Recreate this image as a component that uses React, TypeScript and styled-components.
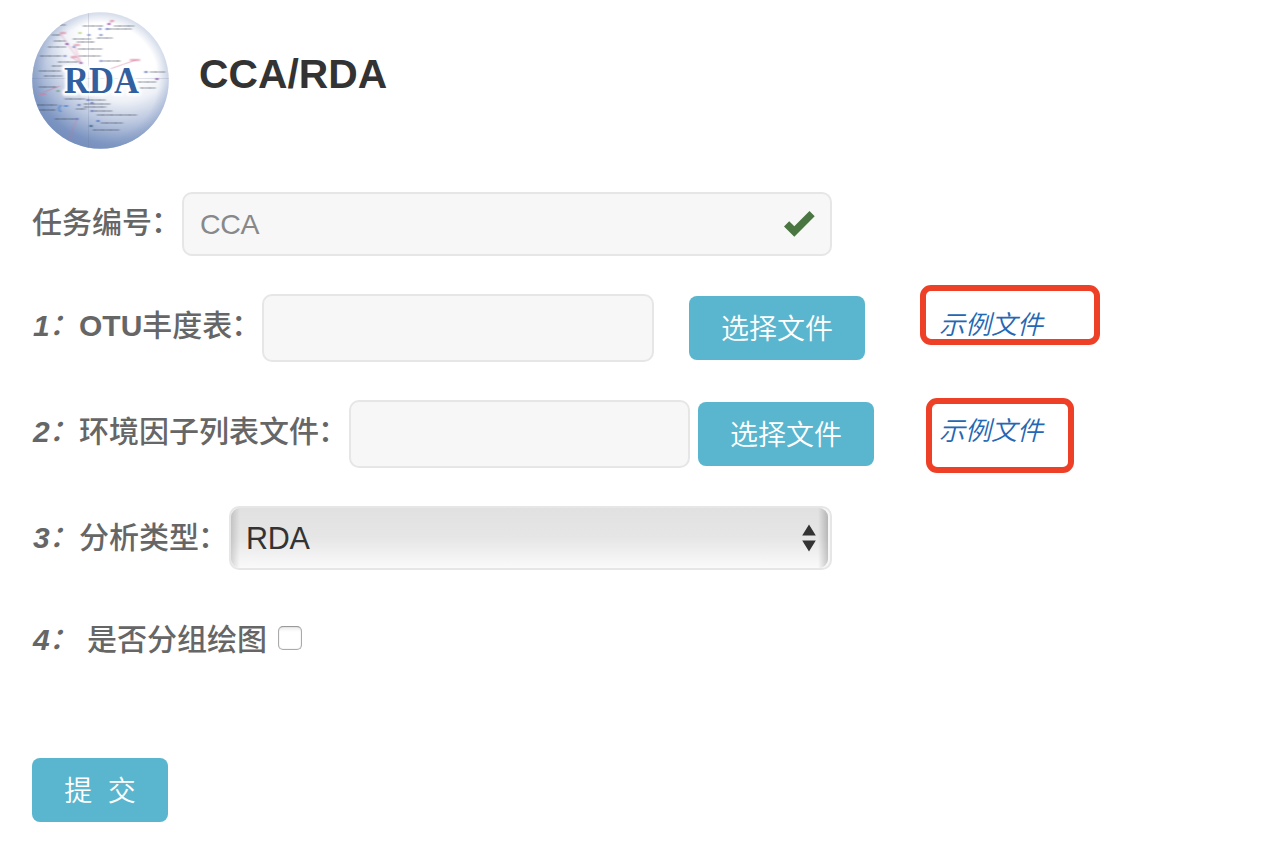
import React from "react";
import styled, { createGlobalStyle } from "styled-components";

const latin = '"Liberation Sans", Arial';
const cjk = '"Noto Sans CJK SC", sans-serif';

const GlobalStyle = createGlobalStyle`
  * { box-sizing: border-box; }
  body {
    margin: 0;
    background: #fff;
    font-family: ${latin}, ${cjk};
  }
`;

const Page = styled.main`
  width: 1270px;
  height: 868px;
  padding: 12px 32px 0;
  overflow: hidden;
`;

const Header = styled.header`
  display: flex;
  align-items: flex-start;
  gap: 30px;
  height: 180px;
`;

const Logo = styled.svg`
  width: 137px;
  height: 137px;
  flex: none;
`;

const Title = styled.h1`
  margin: 39px 0 0;
  font-size: 40.8px;
  line-height: 46px;
  font-weight: 700;
  color: #333;
`;

const Row = styled.div<{ $height: number; $gap: number }>`
  display: flex;
  align-items: center;
  height: ${(p) => p.$height}px;
  margin-bottom: ${(p) => p.$gap}px;
`;

const Label = styled.label<{ $width: number; $top?: number; $bottom?: number }>`
  flex: none;
  width: ${(p) => p.$width}px;
  padding: ${(p) => p.$top ?? 0}px 0 ${(p) => p.$bottom ?? 0}px;
  display: flex;
  align-items: baseline;
  white-space: pre;
  font-size: 30px;
  line-height: 40px;
  font-weight: 500;
  color: #666;
`;

const Latin = styled.span`
  font-weight: 700;
`;

const Step = styled.span<{ $space?: number }>`
  padding-left: 1px;
  font-style: italic;
  font-weight: 700;
  width: ${(p) => p.$space ?? 47}px;
`;

const Colon = styled.span`
  display: inline-block;
  width: 30px;
  margin-left: -1px;
  font-weight: 500;
  transform: translateY(-1px);
`;

const Field = styled.div<{ $width: number }>`
  display: flex;
  align-items: center;
  justify-content: space-between;
  flex: none;
  width: ${(p) => p.$width}px;
  height: 100%;
  padding: 0 15px 0 16px;
  border: 2px solid #e6e6e6;
  border-radius: 10px;
  background: #f7f7f7;
  font-size: 28.5px;
  letter-spacing: -0.3px;
  color: #888;
`;

const Check = styled.svg`
  width: 31px;
  height: 26px;
`;

const Button = styled.button<{ $width: number; $left?: number }>`
  flex: none;
  width: ${(p) => p.$width}px;
  height: 64px;
  margin: 0 0 0 ${(p) => p.$left ?? 0}px;
  padding: 3px 0 0;
  border: 0;
  border-radius: 8px;
  background: #5ab6ce;
  color: #fff;
  font-family: ${latin}, ${cjk};
  font-size: 28px;
  font-weight: 350;
  line-height: 61px;
  white-space: pre;
`;

const Example = styled.a<{ $left: number }>`
  position: relative;
  margin-left: ${(p) => p.$left}px;
  padding-bottom: 7px;
  font-size: 26px;
  line-height: 36px;
  font-style: italic;
  font-weight: 350;
  color: #2468b4;
`;

const Marker = styled.span<{ $x: number; $y: number; $w: number; $h: number }>`
  position: absolute;
  left: ${(p) => p.$x}px;
  top: ${(p) => p.$y}px;
  width: ${(p) => p.$w}px;
  height: ${(p) => p.$h}px;
  border: 6px solid #ee4026;
  border-radius: 11px;
`;

const Select = styled.div`
  flex: none;
  width: 603px;
  height: 64px;
  padding-right: 2px;
  border: 2px solid #e6e6e6;
  border-radius: 10px;
  background: #f7f7f7;
`;

const SelectFace = styled.div`
  display: flex;
  align-items: center;
  justify-content: space-between;
  height: 60px;
  padding: 0 12px 0 15px;
  border-radius: 9px;
  background:
    linear-gradient(90deg, rgba(0, 0, 0, 0.14), transparent 9px, transparent calc(100% - 10px), rgba(0, 0, 0, 0.2)),
    linear-gradient(#e1e1e1, #e6e6e6 50%, #fafafa);
  font-size: 30.5px;
  letter-spacing: -0.3px;
  color: #333;
`;

const Arrows = styled.svg`
  width: 14px;
  height: 28px;
`;

const Checkbox = styled.span`
  width: 24px;
  height: 24px;
  border: 1px solid #aaa;
  border-top-color: #999;
  border-radius: 5px;
  background: linear-gradient(#ececec, #fff 5px);
  box-shadow: inset 0 0 1px rgba(0, 0, 0, 0.35);
`;

const names: [number, number, number][] = [
  [22, 13, 12], [51, 14, 20], [82, 14, 20], [76, 17, 24], [20, 23, 8],
  [41, 27, 18], [45, 30, 18], [65, 26, 16], [22, 29, 12], [16, 35, 18],
  [46, 37, 24], [8, 44, 22], [47, 44, 22], [26, 50, 20], [71, 49, 18],
  [20, 54, 10], [7, 59, 22], [12, 64, 18], [118, 60, 15], [106, 70, 18],
  [7, 75, 18], [108, 76, 16], [33, 87, 20], [58, 88, 16], [5, 93, 20],
  [52, 92, 26], [6, 98, 18], [52, 95, 22], [44, 97, 10], [62, 99, 18],
  [65, 103, 40], [23, 107, 22], [69, 111, 22], [61, 118, 26],
];

const dots: [number, number, string][] = [
  [77, 12, "#9c4fb0"], [75, 17, "#8290cb"], [68, 17, "#8290cb"], [69, 23, "#8290cb"],
  [57, 23, "#8290cb"], [48, 21, "#b9cf78"], [35, 32, "#844fa8"], [42, 35, "#8290cb"],
  [33, 44, "#8290cb"], [49, 51, "#9366af"], [69, 49, "#8290cb"], [114, 60, "#6676bd"],
  [125, 67, "#864fb2"], [56, 88, "#6676bd"], [60, 91, "#6676bd"], [47, 93, "#6676bd"],
  [60, 99, "#6676bd"], [45, 107, "#6676bd"], [66, 109, "#4e73c5"],
  [59, 114, "#306184"], [26, 79, "#73a17b"],
];

function RdaLogo() {
  return (
    <Logo viewBox="0 0 137 137">
      <defs>
        <radialGradient id="ball" cx="0.66" cy="0.22" r="0.86">
          <stop offset="0.34" stopColor="#ffffff" />
          <stop offset="0.5" stopColor="#eef1f7" />
          <stop offset="0.68" stopColor="#bcc8e0" />
          <stop offset="0.88" stopColor="#7b94c1" />
          <stop offset="1" stopColor="#6884b6" />
        </radialGradient>
        <radialGradient id="rim" cx="0.5" cy="0.5" r="0.5">
          <stop offset="0.84" stopColor="#8299c2" stopOpacity="0" />
          <stop offset="1" stopColor="#8299c2" stopOpacity="0.35" />
        </radialGradient>
        <clipPath id="disc"><circle cx="68.5" cy="68.5" r="68.3" /></clipPath>
        <filter id="soft" x="-5%" y="-5%" width="110%" height="110%"><feGaussianBlur stdDeviation="0.85 0.65" /></filter>
        <filter id="glow"><feGaussianBlur stdDeviation="0.9" /></filter>
      </defs>
      <g clipPath="url(#disc)">
        <rect width="137" height="137" fill="url(#ball)" />
        <rect width="137" height="137" fill="url(#rim)" />
        <path d="M56.5 0V137M0 66.5H137" stroke="#6d7894" strokeOpacity="0.2" />
        <g filter="url(#soft)">
          <path d="M49 51L28 21M49 51L42 33M49 51L39 45M75 58L104 48M12 80L28 74M38 127Q41 114 45 107M77 12L81 8" fill="none" stroke="#d66b91" strokeOpacity="0.55" strokeWidth="0.9" />
          <path d="M28 21h6M42 33h6M39 45h6M98 48h10M7 82h7M78 9h4" stroke="#dc7695" strokeOpacity="0.5" strokeWidth="2.4" />
          {names.map(([x, y, w], i) => (
            <path key={i} d={`M${x} ${y}h${w}`} stroke="#3e4759" strokeOpacity="0.34" strokeWidth="2" strokeDasharray={i % 2 ? "4 .8 2.5 .6" : "2.5 .7 5 .8"} />
          ))}
          <path d="M29 93q-4 4 0 7M32 94h4" fill="none" stroke="#4f85d4" strokeWidth="1.5" />
          {dots.map(([x, y, c], i) => (
            <circle key={i} cx={x} cy={y} r="1.3" fill={c} />
          ))}
        </g>
        <g fontFamily="Liberation Serif, serif" fontWeight="700" fontSize="37.5">
          <text x="32" y="80.5" textLength="75" lengthAdjust="spacingAndGlyphs" fill="#fff" stroke="#fff" strokeWidth="5.5" strokeLinejoin="round" filter="url(#glow)">RDA</text>
          <text x="32" y="80.5" textLength="75" lengthAdjust="spacingAndGlyphs" fill="#315f9f">RDA</text>
        </g>
      </g>
    </Logo>
  );
}

export default function App() {
  return (
    <>
      <GlobalStyle />
      <Page>
        <Header>
          <RdaLogo />
          <Title>CCA/RDA</Title>
        </Header>
        <Row $height={64} $gap={38}>
          <Label $width={150} $bottom={2}>任务编号<Colon>：</Colon></Label>
          <Field $width={650}>
            CCA
            <Check viewBox="0 0 31 26">
              <path d="M0 15.5L5.2 10.3L10.3 15.2L25.5 0L30.7 5.2L10.3 25.7Z" fill="#4a7641" />
            </Check>
          </Field>
        </Row>
        <Row $height={68} $gap={38}>
          <Label $width={230} $bottom={4}>
            <Step>1<Colon>：</Colon></Step><Latin>OTU</Latin>丰度表<Colon>：</Colon>
          </Label>
          <Field $width={392} />
          <Button $width={176} $left={35}>选择文件</Button>
          <Example $left={74}>
            示例文件
            <Marker $x={-19} $y={-22} $w={180} $h={60} />
          </Example>
        </Row>
        <Row $height={68} $gap={38}>
          <Label $width={317} $bottom={4}>
            <Step>2<Colon>：</Colon></Step>环境因子列表文件<Colon>：</Colon>
          </Label>
          <Field $width={341} />
          <Button $width={176} $left={8}>选择文件</Button>
          <Example $left={65}>
            示例文件
            <Marker $x={-13} $y={-15} $w={148} $h={75} />
          </Example>
        </Row>
        <Row $height={64} $gap={38}>
          <Label $width={197}>
            <Step>3<Colon>：</Colon></Step>分析类型<Colon>：</Colon>
          </Label>
          <Select>
            <SelectFace>
              RDA
              <Arrows viewBox="0 0 14 28">
                <path d="M7 0.5L13.8 11.5H0.2ZM7 27.5L0.2 16.5H13.8Z" fill="#333" />
              </Arrows>
            </SelectFace>
          </Select>
        </Row>
        <Row $height={60} $gap={90}>
          <Label $width={246} $top={3}>
            <Step $space={55}>4<Colon>：</Colon></Step>是否分组绘图
          </Label>
          <Checkbox />
        </Row>
        <Button $width={136}>提&nbsp;&nbsp;交</Button>
      </Page>
    </>
  );
}
